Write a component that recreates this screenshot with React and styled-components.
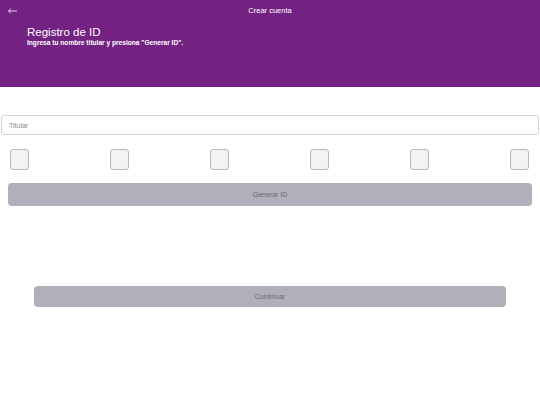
import React from "react";
import styled, { createGlobalStyle } from "styled-components";

const GlobalStyle = createGlobalStyle`
  html, body {
    margin: 0;
    padding: 0;
    background: #ffffff;
    font-family: "Liberation Sans", Arial, sans-serif;
  }
`;

const Header = styled.header`
  background-color: #732282;
  height: 87px;
  box-sizing: border-box;
  padding: 5px 8px 0 8px;
  color: #ffffff;
`;

const TopBar = styled.div`
  display: grid;
  grid-template-columns: 40px 1fr 40px;
  align-items: center;
  height: 12px;
`;

const BackButton = styled.button`
  display: flex;
  align-items: center;
  background: none;
  border: none;
  padding: 0;
  color: #ffffff;
  cursor: pointer;
`;

const BarTitle = styled.div`
  text-align: center;
  font-size: 7.5px;
  line-height: 12px;
`;

const Intro = styled.div`
  padding: 8px 0 0 19px;
`;

const Title = styled.h1`
  margin: 0;
  font-size: 11.5px;
  font-weight: 400;
  line-height: 14px;
`;

const Subtitle = styled.p`
  margin: 0;
  font-size: 6.6px;
  font-weight: 700;
  line-height: 8px;
`;

const Content = styled.main`
  padding-top: 28px;
`;

const Input = styled.input`
  display: block;
  box-sizing: border-box;
  width: calc(100% - 2px);
  margin: 0 1px;
  height: 20px;
  border: 1px solid #d4d4d4;
  border-radius: 3px;
  padding: 0 7px;
  font-size: 7px;
  font-family: "Liberation Sans", Arial, sans-serif;
  color: #333333;
  &::placeholder {
    color: #8a8a8a;
  }
`;

const BoxRow = styled.div`
  display: flex;
  justify-content: space-between;
  padding: 14px 11px 0 10px;
`;

const DigitBox = styled.div`
  box-sizing: border-box;
  width: 19px;
  height: 21px;
  border: 1px solid #b8b8b8;
  border-radius: 3px;
  background: #f3f3f3;
`;

const Button = styled.button`
  display: block;
  box-sizing: border-box;
  width: calc(100% - ${(p) => p.$inset * 2}px);
  margin: ${(p) => p.$top}px ${(p) => p.$inset}px 0;
  height: ${(p) => p.$height}px;
  border: none;
  border-radius: 4px;
  background: #b1afb9;
  color: #6a6a72;
  font-size: 7px;
  font-family: "Liberation Sans", Arial, sans-serif;
`;

export default function App() {
  return (
    <>
      <GlobalStyle />
      <Header>
        <TopBar>
          <BackButton aria-label="Volver">
            <svg width="9" height="6" viewBox="0 0 9 6" fill="none">
              <path d="M0.5 3H9M2.8 0.8L0.5 3L2.8 5.2" stroke="#ffffff" strokeWidth="0.8" />
            </svg>
          </BackButton>
          <BarTitle>Crear cuenta</BarTitle>
          <span />
        </TopBar>
        <Intro>
          <Title>Registro de ID</Title>
          <Subtitle>Ingresa tu nombre titular y presiona "Generar ID".</Subtitle>
        </Intro>
      </Header>
      <Content>
        <Input placeholder="Titular" />
        <BoxRow>
          {[0, 1, 2, 3, 4, 5].map((i) => (
            <DigitBox key={i} />
          ))}
        </BoxRow>
        <Button $inset={8} $top={13} $height={23} disabled>
          Generar ID
        </Button>
        <Button $inset={34} $top={80} $height={21} disabled>
          Continuar
        </Button>
      </Content>
    </>
  );
}
